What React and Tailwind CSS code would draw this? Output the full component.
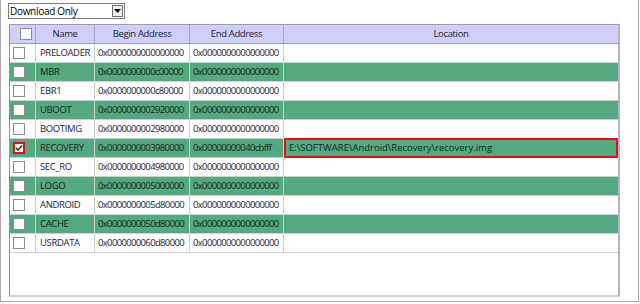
import React from 'react';

const rows = [
  { name: 'PRELOADER', begin: '0x0000000000000000', end: '0x0000000000000000', green: false },
  { name: 'MBR', begin: '0x0000000000c00000', end: '0x0000000000000000', green: true },
  { name: 'EBR1', begin: '0x0000000000c80000', end: '0x0000000000000000', green: false },
  { name: 'UBOOT', begin: '0x0000000002920000', end: '0x0000000000000000', green: true },
  { name: 'BOOTIMG', begin: '0x0000000002980000', end: '0x0000000000000000', green: false },
  { name: 'RECOVERY', begin: '0x0000000003980000', end: '0x00000000040cbfff', green: true, checked: true, location: 'E:\\SOFTWARE\\Android\\Recovery\\recovery.img' },
  { name: 'SEC_RO', begin: '0x0000000004980000', end: '0x0000000000000000', green: false },
  { name: 'LOGO', begin: '0x0000000005000000', end: '0x0000000000000000', green: true },
  { name: 'ANDROID', begin: '0x0000000005d80000', end: '0x0000000000000000', green: false },
  { name: 'CACHE', begin: '0x0000000050d80000', end: '0x0000000000000000', green: true },
  { name: 'USRDATA', begin: '0x0000000060d80000', end: '0x0000000000000000', green: false },
];

function Check({ checked }) {
  if (checked) {
    return (
      <div className="w-[12px] h-[12px] border-2 border-[#e0101a] bg-white flex items-center justify-center">
        <svg width="8" height="8" viewBox="0 0 8 8">
          <path d="M1 4 L3 6 L7 1.5" stroke="#222" strokeWidth="1.3" fill="none" />
        </svg>
      </div>
    );
  }
  return <div className="w-[12px] h-[12px] border border-[#8c8c8c] bg-white" />;
}

const grid = 'grid grid-cols-[26px_59px_95px_94px_1fr]';

export default function App() {
  return (
    <div
      className="w-[640px] h-[304px] bg-white relative text-[#1c1c30]"
      style={{ fontFamily: '"Open Sans", "Noto Sans", sans-serif' }}
    >
      <div className="w-[639px] h-[302px] border-l border-r border-b border-[#a8a8a8] bg-white pt-[3px]">
        {/* dropdown */}
        <div className="ml-[7px] w-[117px] h-[16px] border border-[#7a7a7a] flex items-center bg-white">
          <span className="flex-1 pl-[1px] text-[10px] tracking-[-0.3px] leading-none text-black">Download Only</span>
          <div className="w-[11px] h-[12px] mr-[1px] border border-[#6e6e6e] bg-[#f0f0f0] flex items-center justify-center">
            <svg width="7" height="4" viewBox="0 0 7 4"><path d="M0 0 H7 L3.5 4 Z" fill="#000" /></svg>
          </div>
        </div>

        {/* table panel */}
        <div className="mt-[5px] ml-[8px] w-[611px] h-[273px] border-l border-[#8f8f8f] border-r-2 border-r-[#b4b4bc] border-b-2 border-b-[#d0d0d8] bg-white text-[9.5px] tracking-[-0.35px]">
          <div className={`${grid} h-[20px] bg-[#cfcff7] border-t border-b border-[#9c9cb8]`}>
            <div className="border-r border-[#a8a8c8] flex items-center justify-center pl-[6px]">
              <Check />
            </div>
            <div className="border-r border-[#a8a8c8] flex items-center justify-center">Name</div>
            <div className="border-r border-[#a8a8c8] flex items-center justify-center">Begin Address</div>
            <div className="border-r border-[#a8a8c8] flex items-center justify-center">End Address</div>
            <div className="flex items-center justify-center">Location</div>
          </div>
          {rows.map((r) => (
            <div
              key={r.name}
              className={`${grid} h-[19px] border-b border-[#cfcfcf] ${r.green ? 'bg-[#55a87f] text-[#17261d]' : 'bg-white'}`}
            >
              <div className="border-r border-[#cfcfcf] flex items-center pl-[3px]">
                <Check checked={r.checked} />
              </div>
              <div className="border-r border-[#cfcfcf] flex items-center pl-[4px]">{r.name}</div>
              <div className="border-r border-[#cfcfcf] flex items-center pl-[3px] tracking-[-0.65px]">{r.begin}</div>
              <div className="border-r border-[#cfcfcf] flex items-center pl-[3px] tracking-[-0.65px]">{r.end}</div>
              {r.location ? (
                <div className="flex items-center border-2 border-[#e0101a] -my-[1px] pl-[3px] h-[20px] tracking-[0px]">
                  {r.location}
                </div>
              ) : (
                <div />
              )}
            </div>
          ))}
        </div>
      </div>
    </div>
  );
}
